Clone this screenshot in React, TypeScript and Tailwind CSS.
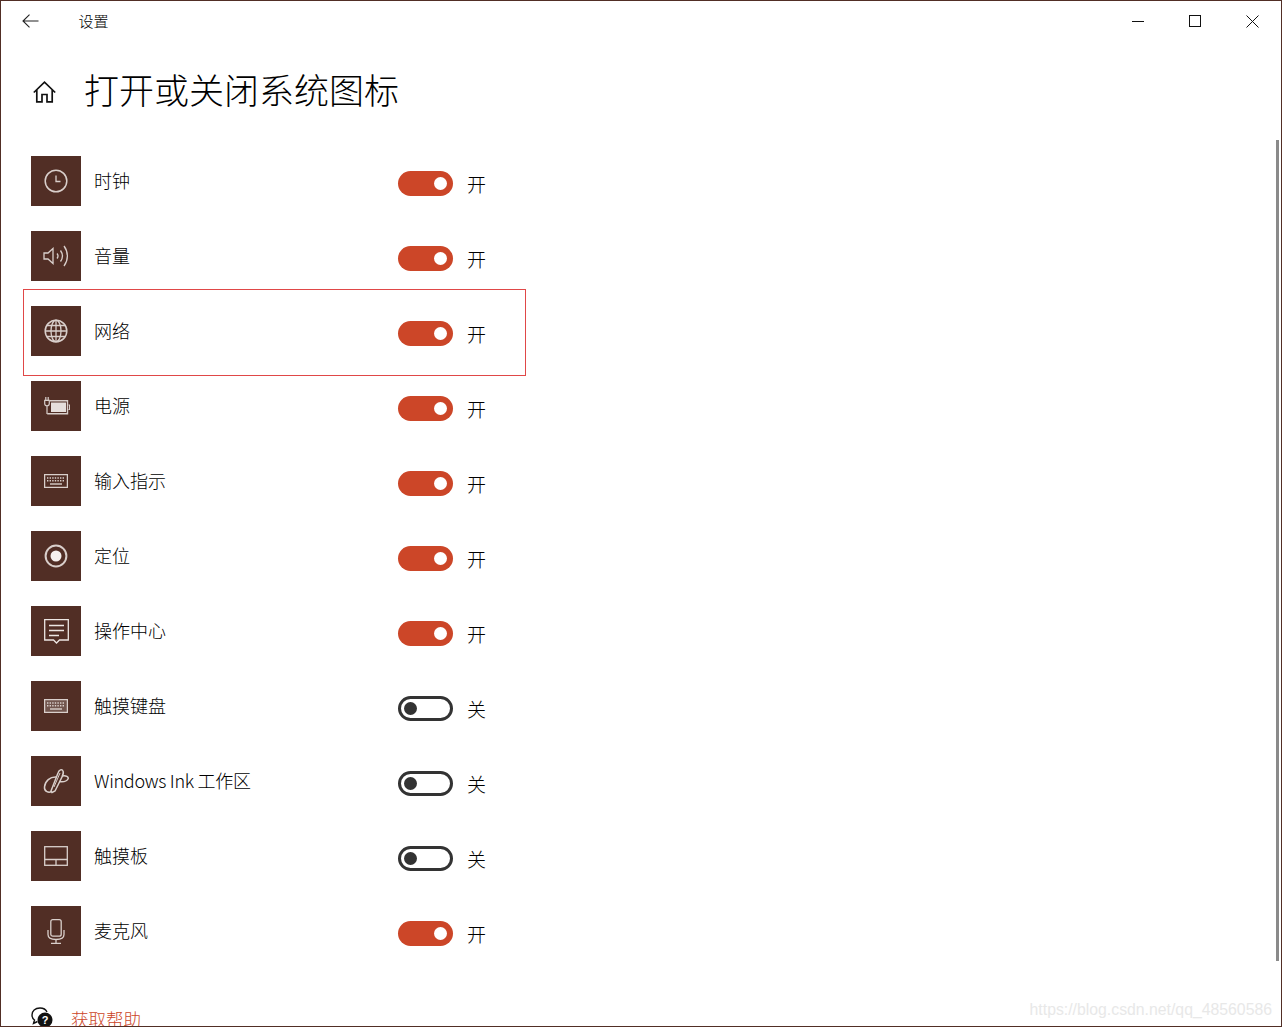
const FONT = "font-['Noto_Sans_CJK_SC','Noto_Sans',sans-serif]";

const S = { fill: "none", stroke: "#d9cfcb", strokeWidth: 1.3 };

function Clock() {
  return (
    <svg width="24" height="24" viewBox="0 0 24 24" {...S}>
      <circle cx="12" cy="12" r="10.8" strokeWidth="1.5" />
      <path d="M12 6.5V12.5H16.5" />
    </svg>
  );
}
function Speaker() {
  return (
    <svg width="26" height="24" viewBox="0 0 26 24" {...S}>
      <path d="M1 9H5L10 4.5V19.5L5 15H1Z" />
      <path d="M14 9.5C15.2 11 15.2 13 14 14.5" />
      <path d="M17.5 6.5C20 10 20 14 17.5 17.5" />
      <path d="M21 2C25.5 8 25.5 16 21 22" />
    </svg>
  );
}
function Globe() {
  return (
    <svg width="24" height="24" viewBox="0 0 24 24" {...S}>
      <circle cx="12" cy="12" r="10.8" strokeWidth="1.5" />
      <ellipse cx="12" cy="12" rx="5" ry="10.8" />
      <path d="M12 1.2V22.8M1.2 12H22.8M3 6.5H21M3 17.5H21" />
    </svg>
  );
}
function Battery() {
  return (
    <svg className="ml-[2px]" width="26" height="18" viewBox="0 0 26 18" {...S}>
      <path d="M6 3.7H23.5V16.8H3.2" strokeWidth="1.4" />
      <rect x="7" y="5.5" width="15" height="9.5" fill="#e6dfdc" stroke="none" />
      <path d="M24.5 8H25.6V12.5H24.5" strokeWidth="1.2" />
      <path d="M0.7 3.4H5.3V6.5C5.3 8 4.4 8.8 3 8.8S0.7 8 0.7 6.5ZM1.8 0V3.4M4.2 0V3.4M3 8.8V17" strokeWidth="1.2" />
    </svg>
  );
}
function Keyboard({ dense }: { dense?: boolean }) {
  return (
    <svg width="24" height="14" viewBox="0 0 24 14" {...S}>
      <rect x="0.6" y="0.6" width="22.8" height="12.8" fill={dense ? "#d9cfcb" : "none"} fillOpacity={dense ? 0.25 : 0} />
      <path d="M3 4H21M3 6.7H21" strokeDasharray="1.4 1.2" strokeWidth="1.4" />
      <path d="M6 10H18" strokeWidth="1.4" />
    </svg>
  );
}
function Target() {
  return (
    <svg width="24" height="24" viewBox="0 0 24 24">
      <circle cx="12" cy="12" r="10.4" fill="none" stroke="#d9cfcb" strokeWidth="2" />
      <circle cx="12" cy="12" r="5.5" fill="#f5f0ee" />
    </svg>
  );
}
function ActionCenter() {
  return (
    <svg className="ml-[1px]" width="25" height="25" viewBox="0 0 25 25" {...S} stroke="#ede6e3">
      <path d="M0.7 0.7H24.3V21H15.5L12.5 24L9.5 21H0.7Z" />
      <path d="M5 6.5H20M5 11.5H20M5 16.5H15" />
    </svg>
  );
}
function Ink() {
  return (
    <svg width="26" height="26" viewBox="0 0 26 26" {...S} strokeWidth="1.5">
      <path d="M8 23L15 5C16 2 19 0.5 20 3C21 5 20 7 19 9L12 23L9 24.5Z" />
      <path d="M11 19L17 5" strokeWidth="1" />
      <path d="M13.5 9C7 8.5 2 13 1.5 19C1 24 6 25 8.5 23.5" />
      <path d="M19 8C23 7 26 9 25 11C24 13 20 14 16 13.5" />
    </svg>
  );
}
function Touchpad() {
  return (
    <svg width="24" height="20" viewBox="0 0 24 20" {...S}>
      <rect x="0.7" y="0.7" width="22.6" height="18.6" />
      <path d="M0.7 13.5H23.3M12 13.5V19.3" />
    </svg>
  );
}
function Mic() {
  return (
    <svg width="18" height="25" viewBox="0 0 18 25" {...S}>
      <rect x="3.8" y="0.7" width="10.4" height="16.5" rx="2" />
      <path d="M1 11V15.5C1 18.5 4 20.5 9 20.5S17 18.5 17 15.5V11" />
      <path d="M9 20.5V24.3M4 24.4H14" />
    </svg>
  );
}

const rows = [
  { label: "时钟", on: true, icon: <Clock /> },
  { label: "音量", on: true, icon: <Speaker /> },
  { label: "网络", on: true, icon: <Globe />, focus: true },
  { label: "电源", on: true, icon: <Battery /> },
  { label: "输入指示", on: true, icon: <Keyboard /> },
  { label: "定位", on: true, icon: <Target /> },
  { label: "操作中心", on: true, icon: <ActionCenter /> },
  { label: "触摸键盘", on: false, icon: <Keyboard dense /> },
  { label: "Windows Ink 工作区", on: false, icon: <Ink />, tight: true },
  { label: "触摸板", on: false, icon: <Touchpad /> },
  { label: "麦克风", on: true, icon: <Mic /> },
];

function Toggle({ on }: { on: boolean }) {
  return on ? (
    <div className="flex h-[25px] w-[55px] items-center justify-end rounded-full bg-[#cc4628] pr-[6px]">
      <div className="h-[13px] w-[13px] rounded-full bg-white" />
    </div>
  ) : (
    <div className="flex h-[25px] w-[55px] items-center rounded-full border-[3px] border-[#333333] bg-white pl-[3px]">
      <div className="h-[13px] w-[13px] rounded-full bg-[#333333]" />
    </div>
  );
}

function Row({ label, on, icon, focus, tight }: { label: string; on: boolean; icon: React.ReactNode; focus?: boolean; tight?: boolean }) {
  return (
    <div className="relative flex h-[75px] shrink-0 pl-[30px]">
      {focus && <div className="absolute left-[22px] top-[-17px] h-[87px] w-[503px] border border-[#e04848]" />}
      <div className="flex h-[50px] w-[50px] shrink-0 items-center justify-center bg-[#512e25]">{icon}</div>
      <div className="ml-[13px] flex h-[50px] w-[304px] shrink-0 items-center pb-[3px] text-[18px] leading-[24px] text-black">
        {tight ? <span className="tracking-[-0.3px]">{label}</span> : label}
      </div>
      <div className="mt-[15px]">
        <Toggle on={on} />
      </div>
      <div className="ml-[14px] mt-[16px] text-[19px] leading-[24px] text-black">{on ? "开" : "关"}</div>
    </div>
  );
}

export default function App() {
  return (
    <div className={`relative h-[1027px] w-[1282px] overflow-hidden border border-[#512e25] bg-white ${FONT} font-light`}>
      <div className="flex h-[40px] items-center">
        <div className="ml-[21px] w-[57px]">
          <svg width="17" height="14" viewBox="0 0 17 14" fill="none" stroke="#222" strokeWidth="1.1">
            <path d="M16.5 7H1M7.5 0.7L1 7L7.5 13.3" />
          </svg>
        </div>
        <span className="-ml-[0.5px] text-[15px] text-black">设置</span>
        <div className="ml-auto mr-[22px] flex items-center gap-[45px]">
          <div className="h-[1px] w-[12px] bg-[#111]" />
          <div className="h-[12px] w-[12px] border border-[#111]" />
          <svg width="13" height="13" viewBox="0 0 13 13" fill="none" stroke="#111" strokeWidth="1">
            <path d="M0.5 0.5L12.5 12.5M12.5 0.5L0.5 12.5" />
          </svg>
        </div>
      </div>
      <div className="flex h-[100px] items-center pb-[4px]">
        <div className="ml-[32px] mt-[5px] w-[51px]">
          <svg width="23" height="22" viewBox="0 0 23 22" fill="none" stroke="#111" strokeWidth="1.7">
            <path d="M0.8 11.5L11.5 1.2L22.2 11.5M3.8 8.6V20.8H9V13.5H14V20.8H19.2V8.6" />
          </svg>
        </div>
        <h1 className="text-[35px] font-light leading-[48px] text-black">打开或关闭系统图标</h1>
      </div>
      <div className="mt-[15px] flex flex-col">
        {rows.map((r) => (
          <Row key={r.label} {...r} />
        ))}
      </div>
      <div className="ml-[30px] mt-[26px] flex items-start">
        <svg width="22" height="22" viewBox="0 0 22 22">
          <path d="M9 1C4 1 1 4 1 8C1 10 2 12 3.5 13L2.5 16.5L6.5 14.5" fill="none" stroke="#111" strokeWidth="1.4" />
          <path d="M9 1C12.5 1 15 2.8 16 5" fill="none" stroke="#111" strokeWidth="1.4" />
          <circle cx="14" cy="13" r="7.5" fill="#111" />
          <path d="M18 19L20.5 21.5L15 20Z" fill="#111" />
          <text x="14" y="17" textAnchor="middle" fontSize="11" fontWeight="700" fontFamily="Liberation Sans" fill="#fff">?</text>
        </svg>
        <span className="ml-[18px] text-[17.5px] leading-[24px] text-[#cc4628]">获取帮助</span>
      </div>
      <div className="absolute left-[1275px] top-[139px] h-[821px] w-[3px] bg-[#8a8a8a]" />
      <div className="absolute right-[9px] top-[997px] font-['Liberation_Sans',sans-serif] text-[15.8px] font-normal leading-[24px] text-[#e8e8e8]">
        https://blog.csdn.net/qq_48560586
      </div>
    </div>
  );
}
